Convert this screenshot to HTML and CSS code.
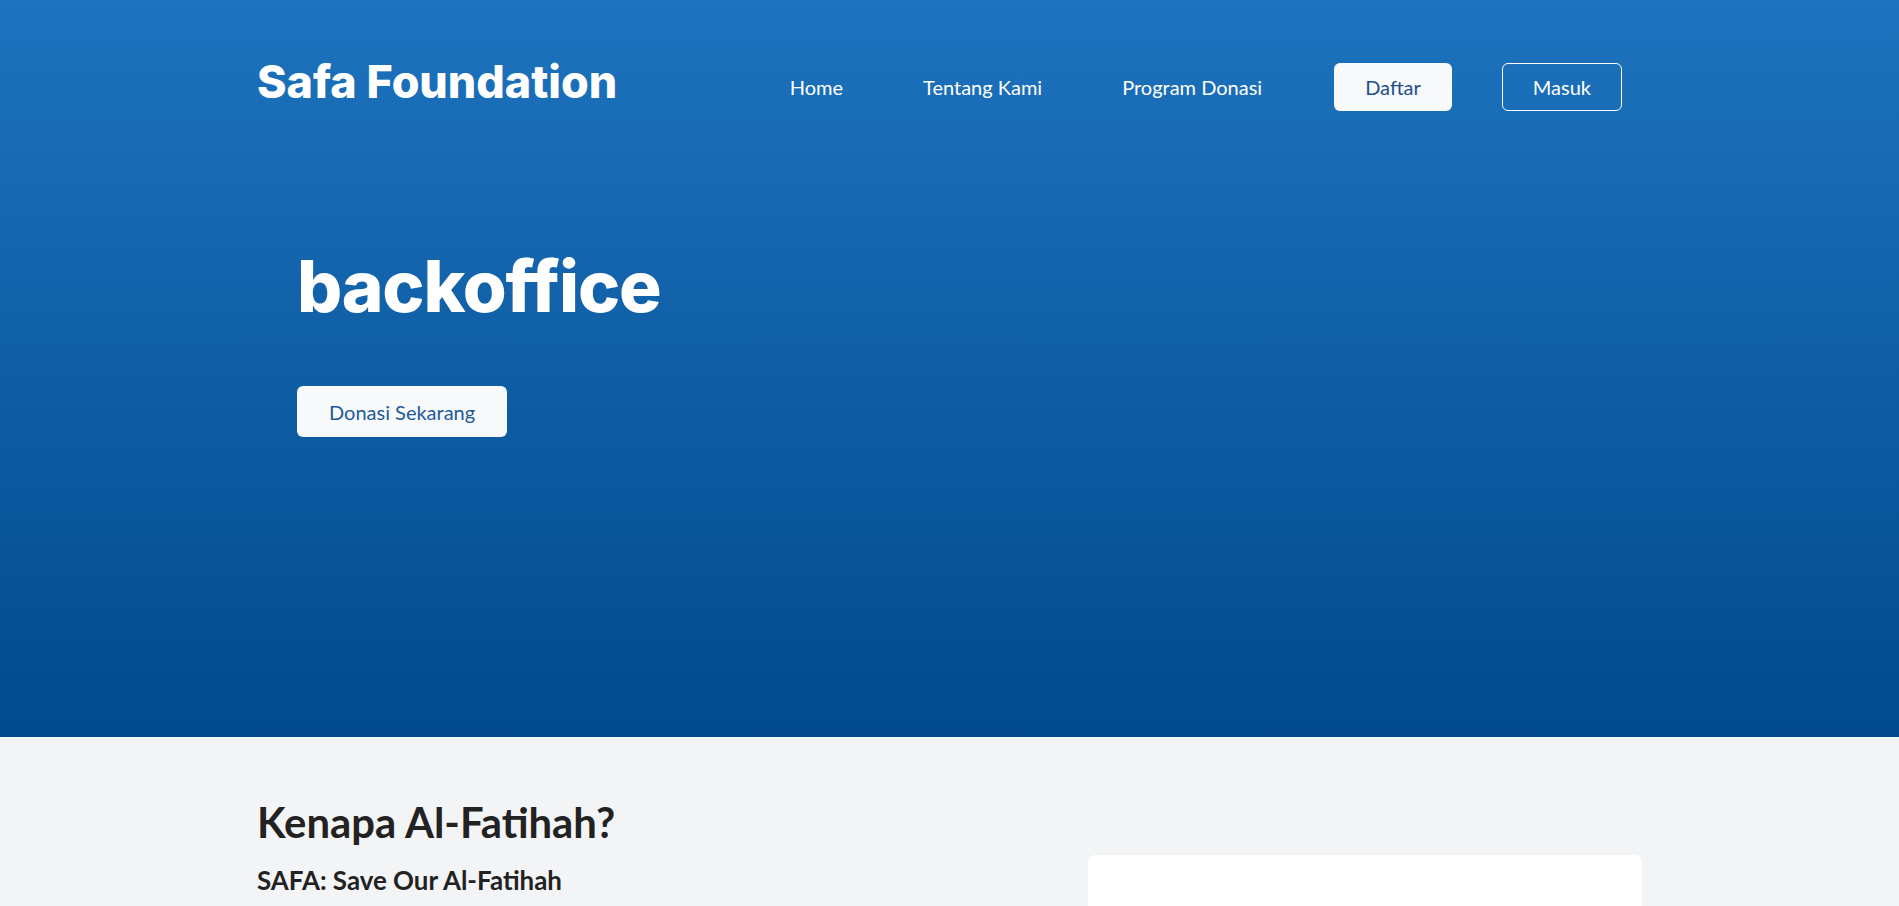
FILE: index.html
```html
<!DOCTYPE html>
<html lang="id">
<head>
<meta charset="utf-8">
<title>Safa Foundation</title>
<link rel="stylesheet" href="styles.css">
</head>
<body>
<section class="hero">
  <div class="container">
    <header class="header">
      <div class="logo">Safa Foundation</div>
      <nav class="nav">
        <a class="nav-link" href="#">Home</a>
        <a class="nav-link" href="#">Tentang Kami</a>
        <a class="nav-link" href="#">Program Donasi</a>
        <a class="btn btn-light btn-daftar" href="#">Daftar</a>
        <a class="btn btn-outline btn-masuk" href="#">Masuk</a>
      </nav>
    </header>
    <div class="hero-content">
      <h1 class="hero-title">backoffice</h1>
      <a class="btn btn-light btn-donasi" href="#">Donasi Sekarang</a>
    </div>
  </div>
</section>
<section class="about">
  <div class="container about-grid">
    <div class="about-text">
      <h2 class="about-title">Kenapa Al-Fatihah?</h2>
      <h3 class="about-subtitle">SAFA: Save Our Al-Fatihah</h3>
    </div>
    <div class="about-card"></div>
  </div>
</section>
</body>
</html>
```
FILE: styles.css
```css
* { box-sizing: border-box; }

body {
  margin: 0;
  font-family: "Lato", "Noto Sans", sans-serif;
  background: #f3f4f6;
  color: #222222;
}

a { text-decoration: none; }

.container {
  width: 1385px;
  margin: 0 auto;
}

.hero {
  height: 737px;
  background: linear-gradient(180deg, #1e73be 0%, #004a8d 100%);
  color: #ffffff;
}

.header {
  display: flex;
  align-items: center;
  justify-content: space-between;
  padding: 55px 20px 0 0;
}

.logo {
  font-family: "Inter", sans-serif;
  font-weight: 800;
  font-size: 44.8px;
  line-height: 54px;
  margin-bottom: 9px;
  color: #ffffff;
}

.nav {
  display: flex;
  align-items: center;
}

.nav-link {
  color: #ffffff;
  font-size: 20px;
  line-height: 24px;
  padding: 0 40px;
}

.btn {
  display: inline-flex;
  align-items: center;
  justify-content: center;
  font-size: 20px;
  line-height: 24px;
  border-radius: 6px;
  border: 1px solid transparent;
}

.btn-light {
  background: #f8f9fb;
  color: #1b4f8e;
}

.btn-outline {
  background: transparent;
  color: #ffffff;
  border-color: #ffffff;
}

.btn-daftar {
  height: 48px;
  padding: 0 30px;
  margin-left: 32px;
}

.btn-masuk {
  height: 48px;
  padding: 0 30px;
  margin-left: 50px;
}

.hero-content {
  padding: 126px 0 0 40px;
  display: flex;
  flex-direction: column;
  align-items: flex-start;
}

.hero-title {
  margin: 0 0 58px;
  font-family: "Inter", sans-serif;
  font-weight: 800;
  font-size: 71px;
  letter-spacing: -1.2px;
  line-height: 84px;
  color: #ffffff;
}

.btn-donasi {
  height: 51px;
  padding: 0 31px;
  color: #1d5a9a;
}

.about {
  padding: 60px 0 80px;
}

.about-grid {
  display: grid;
  grid-template-columns: 1fr 554px;
  align-items: start;
}

.about-title {
  margin: 0 0 18px;
  font-weight: 700;
  font-size: 41.8px;
  line-height: 1.2;
  color: #222222;
}

.about-subtitle {
  margin: 0;
  font-weight: 700;
  font-size: 25.9px;
  line-height: 1.2;
  color: #222222;
}

.about-card {
  margin-top: 58px;
  height: 420px;
  background: #ffffff;
  border-radius: 8px;
}
```
